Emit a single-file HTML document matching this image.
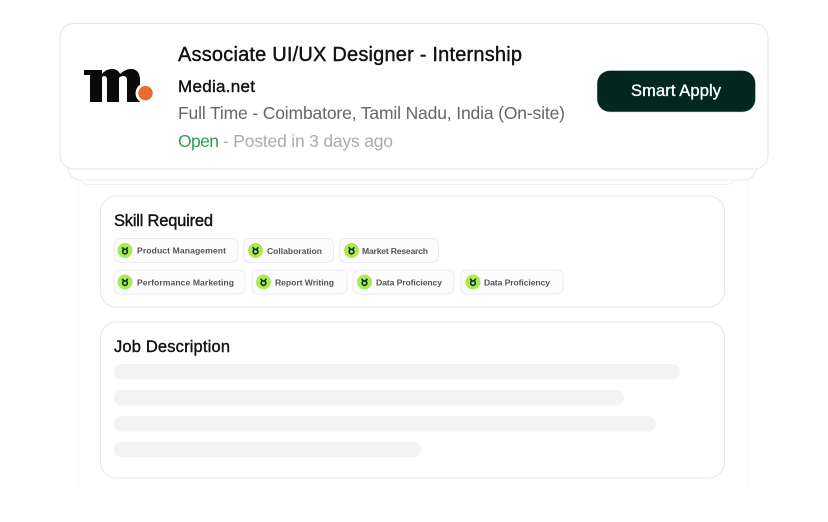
<!DOCTYPE html>
<html><head><meta charset="utf-8"><style>
html,body{margin:0;padding:0;background:#fff;width:828px;height:522px;overflow:hidden}
svg{display:block}
text{font-family:"Liberation Sans",sans-serif}
.t{fill:#121212;stroke:#121212;stroke-width:.4}
.c{font-size:8.6px;font-weight:700;fill:#555}
.chip{fill:#fcfcfc;stroke:#ececec}
.d{fill:#a9ea55}
.i{fill:none;stroke:#0f3022;stroke-width:1.6}
</style></head><body>
<svg width="828" height="522" viewBox="0 0 828 522" xmlns="http://www.w3.org/2000/svg">
<rect x="78.500" y="150" width="670" height="351" rx="20" fill="#fff" stroke="#fbfbfb"/>
<rect x="78.500" y="160" width="658" height="24.500" rx="10" fill="#fff" stroke="#eeeeee"/>
<rect x="68" y="150" width="688" height="30" rx="12" fill="#fff" stroke="#e8e8e8"/>
<rect x="60" y="23.500" width="708" height="145.500" rx="14" fill="#fff" stroke="#e6e6e6"/>

<path d="M84 70H102V74C104 71 108 69 112 69C116 69 119 71 120 74C123 71 127 69 131 69C137 69 140 73 140 80V102H127V80C127 77 125 76 123.500 76C122 76 120 76.500 119 78V102H107V80C107 77 106 76 104 76C103 76 102 76.500 102 78V102H90V75H84Z" fill="#0a0a0a"/>
<circle cx="145.500" cy="93.200" r="10" fill="#fff"/>
<circle cx="145.500" cy="93.200" r="7.200" fill="#ea6d2d"/>

<text class="t" x="178" y="61" font-size="20" textLength="344" lengthAdjust="spacing">Associate UI/UX Designer - Internship</text>
<text class="t" x="178" y="92" font-size="17" textLength="77" lengthAdjust="spacing">Media.net</text>
<text x="178" y="119" font-size="17.500" fill="#666" textLength="387" lengthAdjust="spacing">Full Time - Coimbatore, Tamil Nadu, India (On-site)</text>
<text x="178" y="147" font-size="17.500" fill="#2f9f4f" textLength="41" lengthAdjust="spacing">Open</text>
<text x="223" y="147" font-size="17.500" fill="#ababab" textLength="170" lengthAdjust="spacing">- Posted in 3 days ago</text>

<rect x="597" y="70.500" width="158.500" height="41.500" rx="13" fill="#03281f" stroke="#d8d8d8" stroke-width=".5"/>
<text x="631" y="96" font-size="16.500" fill="#fff" stroke="#fff" stroke-width=".35" textLength="90" lengthAdjust="spacing">Smart Apply</text>

<rect x="100.500" y="196" width="624" height="111" rx="16" fill="#fff" stroke="#e8e8e8"/>
<text class="t" x="114" y="226" font-size="16.500" textLength="99" lengthAdjust="spacing">Skill Required</text>

<rect class="chip" x="114" y="238.500" width="124" height="24" rx="6"/>
<rect class="chip" x="243.500" y="238.500" width="90" height="24" rx="6"/>
<rect class="chip" x="339.500" y="238.500" width="99" height="24" rx="6"/>
<rect class="chip" x="114" y="270" width="131" height="24" rx="6"/>
<rect class="chip" x="252" y="270" width="95" height="24" rx="6"/>
<rect class="chip" x="353" y="270" width="101" height="24" rx="6"/>
<rect class="chip" x="461" y="270" width="102" height="24" rx="6"/>

<defs><g id="b"><circle r="7.500" class="d"/><circle cy="1.100" r="2.300" class="i"/><path class="i" d="M-2.800-3.200L-1.100-1M2.800-3.200L1.100-1"/></g></defs>
<use href="#b" x="125" y="250.500"/>
<use href="#b" x="255.500" y="250.500"/>
<use href="#b" x="351.500" y="250.500"/>
<use href="#b" x="125" y="282"/>
<use href="#b" x="263.500" y="282"/>
<use href="#b" x="364.500" y="282"/>
<use href="#b" x="473" y="282"/>

<text class="c" x="137" y="253.500" textLength="89" lengthAdjust="spacing">Product Management</text>
<text class="c" x="267" y="254" textLength="55" lengthAdjust="spacing">Collaboration</text>
<text class="c" x="362" y="254" textLength="66" lengthAdjust="spacing">Market Research</text>
<text class="c" x="137" y="285.500" textLength="97" lengthAdjust="spacing">Performance Marketing</text>
<text class="c" x="275" y="285.500" textLength="59" lengthAdjust="spacing">Report Writing</text>
<text class="c" x="376" y="285.500" textLength="66" lengthAdjust="spacing">Data Proficiency</text>
<text class="c" x="484" y="285.500" textLength="66" lengthAdjust="spacing">Data Proficiency</text>

<rect x="100.500" y="322" width="624" height="156" rx="16" fill="#fff" stroke="#e8e8e8"/>
<text class="t" x="114" y="352" font-size="16.500" textLength="116" lengthAdjust="spacing">Job Description</text>
<rect x="114" y="364" width="566" height="15.500" rx="7.750" fill="#f3f3f3"/>
<rect x="114" y="390" width="510" height="15.500" rx="7.750" fill="#f3f3f3"/>
<rect x="114" y="416" width="542" height="15.500" rx="7.750" fill="#f3f3f3"/>
<rect x="114" y="441.500" width="307" height="15.500" rx="7.750" fill="#f3f3f3"/>
</svg>
</body></html>
